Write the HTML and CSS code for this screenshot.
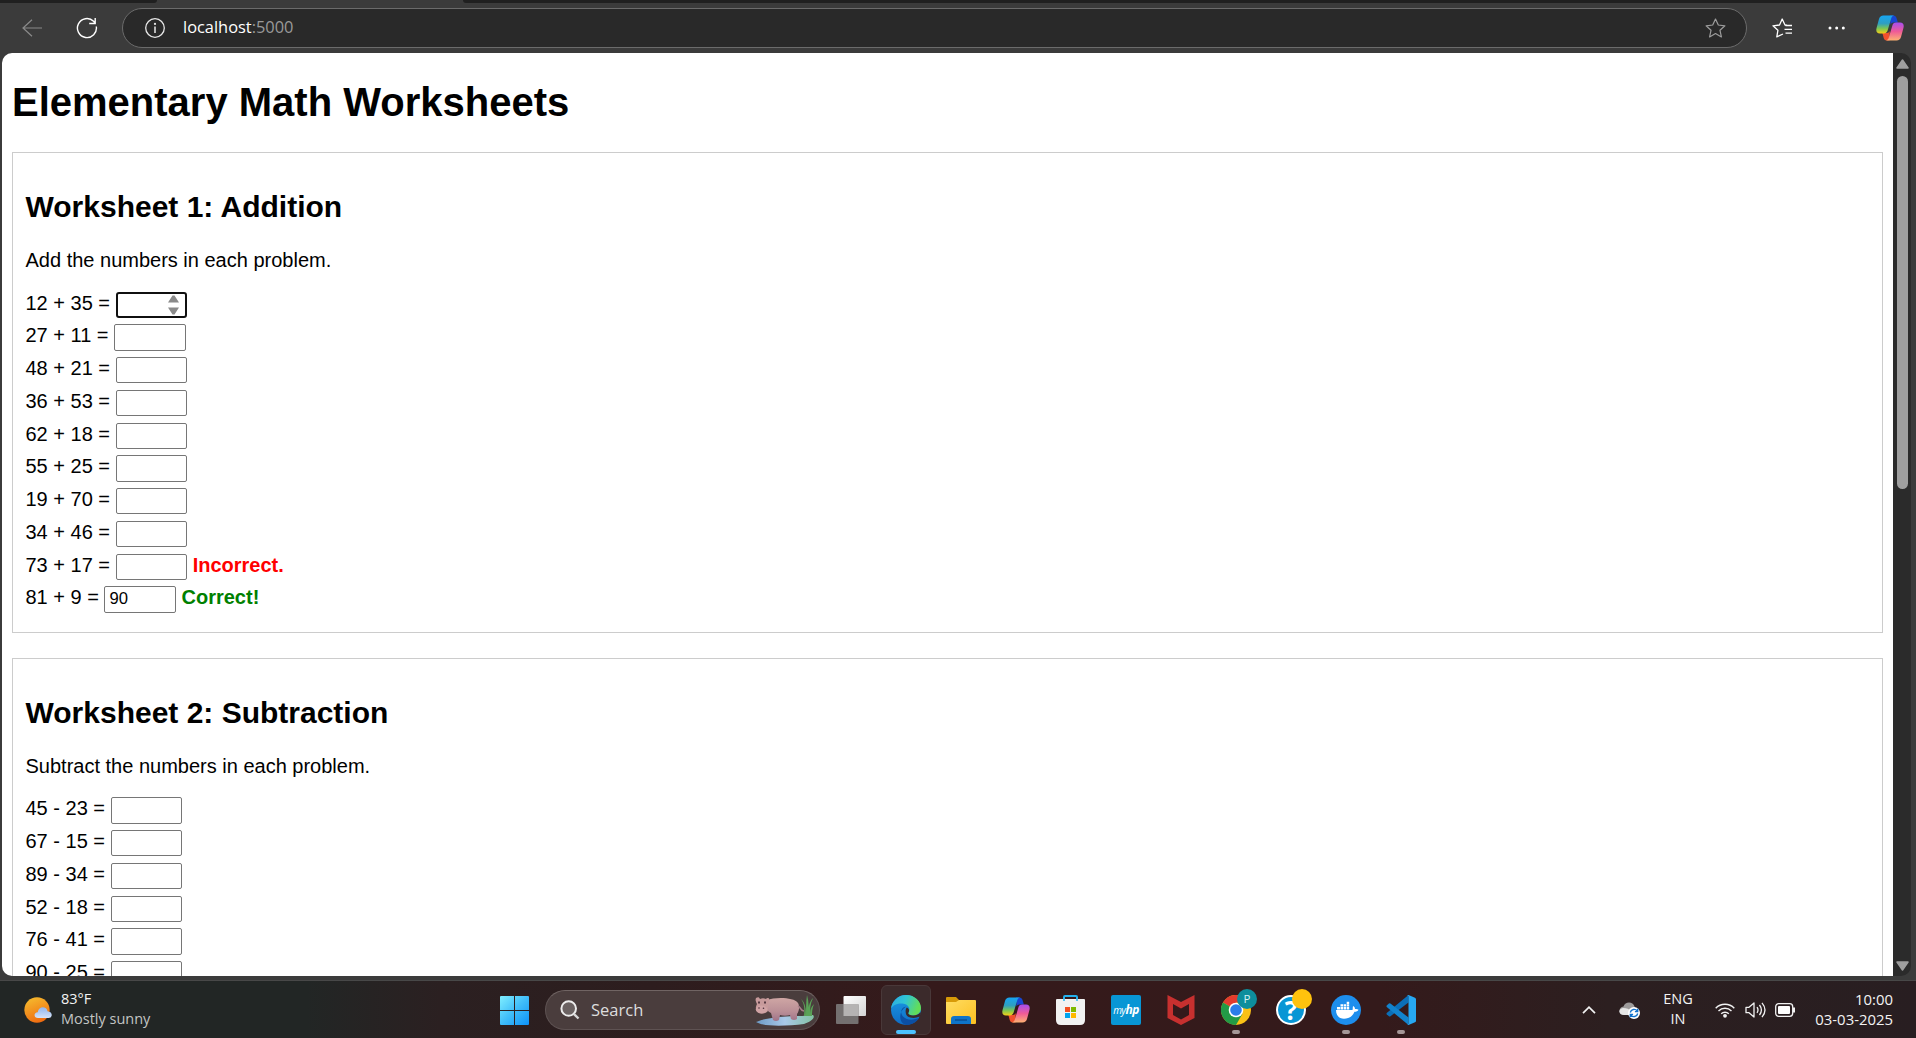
FILE: index.html
```html
<!DOCTYPE html>
<html lang="en">
<head>
<meta charset="utf-8">
<title>Elementary Math Worksheets</title>
<link rel="stylesheet" href="styles.css">
</head>
<body>
<svg width="0" height="0" class="defs" aria-hidden="true">
  <defs>
    <linearGradient id="cpA" x1="0" y1="0" x2="0" y2="1"><stop offset="0" stop-color="#16a5f3"/><stop offset=".45" stop-color="#2f9fc0"/><stop offset=".72" stop-color="#7cc653"/><stop offset="1" stop-color="#f5cf17"/></linearGradient>
    <linearGradient id="cpB" x1="0" y1="0" x2="0" y2="1"><stop offset="0" stop-color="#a64df0"/><stop offset=".5" stop-color="#ef5b97"/><stop offset="1" stop-color="#fdb172"/></linearGradient>
    <symbol id="copilot" viewBox="0 0 28 26">
      <path d="M14 .5h3.500c1.500 0 2.500 1 3 2.500l1.400 4.500h-4.400c-1.500 0-2.500.8-3 2z" fill="#1746d2"/>
      <path d="M13.500 25.500h-3c-1.500 0-2.300-1-2.800-2.500L6.400 18h4.400c1.500 0 2.400-.8 2.900-2z" fill="#f0502d"/>
      <path d="M7.500.5H18c-1.600.4-2.400 1.500-2.900 3.200l-3.400 11.600c-.6 2-1.700 3.200-3.900 3.200H4C.8 18.500-.2 16.500.5 13.200L3 4C3.700 1.700 5 .5 7.500.5z" fill="url(#cpA)"/>
      <path d="M20.500 25.500H10c1.600-.4 2.400-1.500 2.900-3.200l3.400-11.600c.6-2 1.700-3.200 3.900-3.200H24c3.200 0 4.200 2 3.500 5.300L25 22c-.7 2.300-2 3.500-4.500 3.500z" fill="url(#cpB)"/>
    </symbol>
  </defs>
</svg>

<div class="desktop">
  <header class="browser">
    <div class="tabs"><span class="tab-left"></span><span class="tab-right"></span></div>
    <div class="toolbar">
      <svg class="back" width="20" height="18" viewBox="0 0 20 18"><path d="M10 .7 1 9l9 8.300M1 9h19" fill="none" stroke="#8a8a8a" stroke-width="1.200"/></svg>
      <svg class="reload" width="22" height="22" viewBox="0 0 22 22"><path d="M20.300 9.500A9.500 9.500 0 1 1 17.600 4.300L19 6M19.200 1v5.500h-6" fill="none" stroke="#fff" stroke-width="1.400"/></svg>
      <div class="address">
        <svg width="20" height="20" viewBox="0 0 20 20"><circle cx="10" cy="10" r="9.300" fill="none" stroke="#e8e8e8" stroke-width="1.300"/><path d="M10 8.500v6.500" stroke="#e8e8e8" stroke-width="1.500"/><circle cx="10" cy="5.900" r="1.100" fill="#e8e8e8"/></svg>
        <span class="url">localhost<span class="port">:5000</span></span>
        <svg class="star" width="21" height="20" viewBox="0 0 21 20"><path d="m10.500 1 2.800 6 6.600.8-4.900 4.500 1.400 6.600-5.900-3.300-5.900 3.300L6 12.300 1.100 7.800 7.700 7z" fill="none" stroke="#9c9c9c" stroke-width="1.200" stroke-linejoin="round"/></svg>
      </div>
      <svg class="favs" width="21" height="20" viewBox="0 0 21 20"><path d="M11 16 4.800 18.900 5.900 12.300 1 7.800 7.500 7l2.700-6L13 7l2 .4" fill="none" stroke="#fff" stroke-width="1.300" stroke-linejoin="round"/><path d="M13.500 7.500H20M12.500 11.300H20M13.500 15.200H20" fill="none" stroke="#fff" stroke-width="1.300"/></svg>
      <svg class="more" width="18" height="4" viewBox="0 0 18 4"><g fill="#fff"><circle cx="2" cy="2" r="1.500"/><circle cx="8.700" cy="2" r="1.500"/><circle cx="15.300" cy="2" r="1.500"/></g></svg>
      <svg class="cp" width="28" height="26"><use href="#copilot"/></svg>
    </div>
  </header>

  <div class="viewport">
    <main class="page">
      <h1>Elementary Math Worksheets</h1>
      <section class="worksheet">
        <h2>Worksheet 1: Addition</h2>
        <p>Add the numbers in each problem.</p>
        <div class="problem"><span>12 + 35 =</span><div class="answer focused"><svg width="11" height="20" viewBox="0 0 11 20"><path d="M4.500.5h2L11 7.500H0zM4.500 19.500h2L11 12.500H0z" fill="#8a8a8a"/></svg></div></div>
        <div class="problem"><span>27 + 11 =</span><div class="answer"></div></div>
        <div class="problem"><span>48 + 21 =</span><div class="answer"></div></div>
        <div class="problem"><span>36 + 53 =</span><div class="answer"></div></div>
        <div class="problem"><span>62 + 18 =</span><div class="answer"></div></div>
        <div class="problem"><span>55 + 25 =</span><div class="answer"></div></div>
        <div class="problem"><span>19 + 70 =</span><div class="answer"></div></div>
        <div class="problem"><span>34 + 46 =</span><div class="answer"></div></div>
        <div class="problem"><span>73 + 17 =</span><div class="answer"></div><b class="incorrect">Incorrect.</b></div>
        <div class="problem"><span>81 + 9 =</span><div class="answer">90</div><b class="correct">Correct!</b></div>
      </section>
      <section class="worksheet">
        <h2>Worksheet 2: Subtraction</h2>
        <p>Subtract the numbers in each problem.</p>
        <div class="problem"><span>45 - 23 =</span><div class="answer"></div></div>
        <div class="problem"><span>67 - 15 =</span><div class="answer"></div></div>
        <div class="problem"><span>89 - 34 =</span><div class="answer"></div></div>
        <div class="problem"><span>52 - 18 =</span><div class="answer"></div></div>
        <div class="problem"><span>76 - 41 =</span><div class="answer"></div></div>
        <div class="problem"><span>90 - 25 =</span><div class="answer"></div></div>
      </section>
    </main>
    <div class="scrollbar">
      <svg width="13" height="10" viewBox="0 0 13 10"><path d="M6.500 1 12 9H1z" fill="#9f9f9f" stroke="#9f9f9f" stroke-width="1.500" stroke-linejoin="round"/></svg>
      <div class="thumb"></div>
      <svg width="13" height="10" viewBox="0 0 13 10"><path d="M6.500 9 12 1H1z" fill="#9f9f9f" stroke="#9f9f9f" stroke-width="1.500" stroke-linejoin="round"/></svg>
    </div>
  </div>

  <footer class="taskbar">
    <div class="weather">
      <svg width="28" height="27" viewBox="0 0 28 27"><defs><linearGradient id="sun" x1=".2" y1="0" x2=".6" y2="1"><stop offset="0" stop-color="#f5bb2e"/><stop offset="1" stop-color="#ef6a10"/></linearGradient><linearGradient id="cl" x1="0" y1="0" x2="0" y2="1"><stop offset="0" stop-color="#8fb5ee"/><stop offset="1" stop-color="#d5e2f8"/></linearGradient></defs><circle cx="13" cy="13" r="12.700" fill="url(#sun)"/><path d="M14 21c-4.500 0-4.500-5.500-.3-5.700 1-7 9.300-6.300 9.800-1 5.500.3 5.500 6.700 1 6.700z" fill="url(#cl)"/></svg>
      <div class="weather-text"><span>83°F</span><span class="dim">Mostly sunny</span></div>
    </div>
    <svg class="start" width="29" height="29" viewBox="0 0 29 29"><defs><linearGradient id="win" gradientUnits="userSpaceOnUse" x1="0" y1="0" x2="29" y2="29"><stop offset="0" stop-color="#80efff"/><stop offset=".5" stop-color="#40bdf9"/><stop offset="1" stop-color="#0d92f8"/></linearGradient></defs><path d="M1 0h13v14H0V1q0-1 1-1zM15 0h13q1 0 1 1v13H15zM0 15h14v14H1q-1 0-1-1zM15 15h14v13q0 1-1 1H15z" fill="url(#win)"/></svg>
    <div class="search">
      <svg width="20" height="20" viewBox="0 0 20 20"><circle cx="8.700" cy="8.500" r="7.300" fill="#6b6262" stroke="#ededed" stroke-width="2"/><path d="m13.800 13.800 4.700 4.700" stroke="#d8d8d8" stroke-width="2.400"/></svg>
      <span>Search</span>
      <svg class="hippo" width="60" height="32" viewBox="0 0 60 32">
        <defs><linearGradient id="hp" x1="0" y1="0" x2="0" y2="1"><stop offset="0" stop-color="#cfa6a4"/><stop offset=".6" stop-color="#b98e96"/><stop offset="1" stop-color="#9f7389"/></linearGradient><linearGradient id="water" x1="0" y1="0" x2="1" y2="0"><stop offset="0" stop-color="#6d9ac5"/><stop offset=".5" stop-color="#a9c9e8"/><stop offset="1" stop-color="#83c2a4"/></linearGradient></defs>
        <path d="M1 28c8-4 28-6 46-6l11-1c3 3-3 7-9 9-17 2-40 3-48-2z" fill="url(#water)"/>
        <g fill="#5aa257"><path d="M49 22C50 14 49 8 45 4c6 5 6 12 6 18zM51 22c0-8 0-14 1-21 2 7 2 14 1 21zM53 22c0-8 1-14 5-18-3 6-3 12-3 18zM55 22c0-6 1-9 4-12-2 5-2 8-2 12z"/></g>
        <path d="M12 6c8-3 27-3 31 3 2 3 1 9-1 11l0 5q-3 2-6 0l-1-4c-3 1-7 1-10 0l-1 5q-3 2-6 0l-2-7c-5-2-6-8-4-13z" fill="url(#hp)"/>
        <path d="M43 12c3 1 2 5 6 5" fill="none" stroke="#a67d88" stroke-width="1.700"/>
        <path d="M1 4c2-1 3-1 4 1 2-1 4-1 6 0 1-2 4-1 3 1l-1 9c1 5-10 6-11 2-2-2-1-5 0-7C1 8 0 6 1 4z" fill="#c79a9b"/>
        <ellipse cx="6.500" cy="15.500" rx="5.700" ry="4" fill="#d0a3a5"/>
        <g fill="#4b303b"><ellipse cx="4" cy="8.500" rx=".9" ry="1.200"/><ellipse cx="10" cy="8.500" rx=".9" ry="1.200"/><circle cx="4" cy="14" r=".8"/><circle cx="8.500" cy="14.200" r=".8"/></g>
      </svg>
    </div>
    <nav class="apps">
      <div class="app"><svg width="30" height="28" viewBox="0 0 30 28"><defs><linearGradient id="tv" x1="0" y1="0" x2="1" y2="1"><stop offset="0" stop-color="#fff"/><stop offset="1" stop-color="#d4d4d4"/></linearGradient></defs><rect x="7.500" width="22.500" height="20" rx="1" fill="url(#tv)"/><rect y="8" width="22.500" height="20" rx="1" fill="#747070"/><path d="M7.500 8h15v12h-15z" fill="#b5b3b3"/></svg></div>
      <div class="app active"><svg width="30" height="30" viewBox="0 0 30 30"><defs><linearGradient id="eg" x1="0" y1="0" x2="1" y2=".3"><stop offset="0" stop-color="#2ba9e6"/><stop offset=".5" stop-color="#30c5d5"/><stop offset="1" stop-color="#62dd59"/></linearGradient><linearGradient id="eb" x1="0" y1="0" x2="0" y2="1"><stop offset="0" stop-color="#1a9be5"/><stop offset="1" stop-color="#0f6cc5"/></linearGradient></defs>
        <circle cx="15" cy="15" r="15" fill="url(#eb)"/>
        <path d="M15 11.500c-5 1-6 6-3.500 9.500 3.500 4 10 5 17 1.500C25 28 20 30 15.500 30 8 29 6.500 17 15 11.500z" fill="#0c4fa3"/>
        <path d="M0 13.500C1 6 7.500 0 15 0c9 0 15 6.500 15 13 0 5-4 7.500-8 7.500-3.500 0-5.500-1.500-4.500-3 2-2.500 1-8.500-6-9C7 8 2 10 0 13.500z" fill="url(#eg)"/>
        <path d="M17.500 17.500c-1 1.500 1 3 4.500 3 3 0 5.500-1.200 7.500-3.300q1 1.500-.7 4.300c-5 2.500-12.500 1.700-13.800-2.500-.7-2.500-.5-5 .8-6.500 2 .5 3 3 1.700 5z" fill="#3b2a2b"/></svg><i class="bar"></i></div>
      <div class="app"><svg width="30" height="27" viewBox="0 0 30 27"><defs><linearGradient id="fd" x1="0" y1="0" x2="1" y2="1"><stop offset="0" stop-color="#ffdc62"/><stop offset="1" stop-color="#fcc021"/></linearGradient></defs><path d="M1 0h9l3 3v5H0V1q0-1 1-1z" fill="#d89a08"/><path d="M0 5h10l3-2h16q1 0 1 1v22q0 1-1 1H1q-1 0-1-1z" fill="url(#fd)"/><path d="M5 27v-5q0-3 3-3h14q3 0 3 3v5z" fill="#0f74c9"/><path d="M9 23h12" stroke="#0a4f93" stroke-width="1.500"/></svg></div>
      <div class="app"><svg width="28" height="26"><use href="#copilot"/></svg></div>
      <div class="app"><svg class="store" width="29" height="30" viewBox="0 0 29 30"><path d="M8 6V2q0-1 1-1h11q1 0 1 1v4" fill="none" stroke="#25b2ee" stroke-width="2"/><path d="M0 5q0-1 1-1h27q1 0 1 1v20q0 5-5 5H5q-5 0-5-5z" fill="#f2f2f2"/><path d="M8 2v4M21 2v4" stroke="#25b2ee" stroke-width="1.500"/><path d="M9 12h5v5H9z" fill="#f25022"/><path d="M15 12h5v5h-5z" fill="#7fba00"/><path d="M9 18h5v5H9z" fill="#00a4ef"/><path d="M15 18h5v5h-5z" fill="#ffb900"/></svg></div>
      <div class="app"><div class="myhp">my<b>hp</b></div></div>
      <div class="app"><svg width="28" height="30" viewBox="0 0 28 30"><path d="m.5 0 13.500 7L27.500 0v23L14 30 .5 23z" fill="#c7302f"/><path d="m6 9 8 4.500L22 9v11l-8 4.500L6 20z" fill="#35191b"/></svg></div>
      <div class="app"><svg width="30" height="30" viewBox="0 0 30 30"><circle cx="15" cy="15" r="15" fill="#fbc116"/><path d="M15 15 2 7.500A15 15 0 0 1 28 7.500H15z" fill="#e33b2e"/><path d="M2 7.500A15 15 0 0 0 15 30l6.500-11.300L15 15z" fill="#229a46"/><circle cx="15" cy="15" r="7.300" fill="#fff"/><circle cx="15" cy="15" r="5.800" fill="#2b7de9"/></svg><span class="badge profile">P</span><i class="dot"></i></div>
      <div class="app"><div class="help">?</div><span class="badge yellow"></span></div>
      <div class="app"><svg width="30" height="30" viewBox="0 0 30 30"><circle cx="15" cy="15" r="15" fill="#1d8eed"/><path d="M5 15h16.500c.5-1.500 0-3 .7-4 1.300.8 1.800 1.800 1.800 3 1.500-.3 2.700 0 3.500.7-.8 1.500-2 2-4 2-2 5-6 7-10.500 7C8 23.700 5 20.500 5 15z" fill="#fff"/><path d="M6 12h3v2.500H6zM9.500 12h2.500v2.500H9.500zM12.600 12h2.500v2.500h-2.500zM15.700 12h2.500v2.500h-2.500zM9.500 9.200h2.500v2.300H9.500zM12.600 9.200h2.500v2.300h-2.500zM15.700 9.200h2.500v2.300h-2.500zM15.700 6.700h2.500V9h-2.500z" fill="#fff"/></svg><i class="dot"></i></div>
      <div class="app"><svg width="30" height="30" viewBox="0 0 30 30"><path d="m.7 19.200 2.200 2q.8.500 1.500 0L22.500 7.500V0L.7 18q-.5.600 0 1.200z" fill="#0b6fb8"/><path d="m.7 10.500 2.200-2q.8-.5 1.500 0L22.500 22.500V30L.7 12q-.5-.6 0-1.500z" fill="#1283cd"/><path d="M22.500 0 29 2.800q1 .5 1 1.500v21.400q0 1-1 1.500L22.500 30q-1 .2-1.500-.5 1.500.5 1.500-1V1.500q0-1.500-1.500-1 .5-.7 1.500-.5z" fill="#27a8f2"/></svg><i class="dot"></i></div>
    </nav>
    <div class="tray">
      <svg class="chev" width="14" height="8" viewBox="0 0 14 8"><path d="m1 7.200 6-6 6 6" fill="none" stroke="#f2f2f2" stroke-width="1.700"/></svg>
      <svg class="cloud" width="21" height="18" viewBox="0 0 21 18"><path d="M6 14C-1 14-1 6 4.500 5.500 6 0 14 0 15.500 5.500L17 9 9 14z" fill="#9c9a9a"/><path d="M5 14c-6 0-6-6.500-1-7 4 0 6 1 8 3l-2 4z" fill="#e6e6e6"/><circle cx="15" cy="12" r="6" fill="#fff"/><path d="M11.300 11.500a3.900 3.900 0 0 1 7-1.500M18.700 12.500a3.900 3.900 0 0 1-7 1.500M18.700 7.800v2.800h-2.800M11.300 16.200v-2.800h2.800" fill="none" stroke="#1272cc" stroke-width="1.400"/></svg>
      <div class="lang"><span>ENG</span><span>IN</span></div>
      <svg class="wifi" width="20" height="16" viewBox="0 0 20 16"><g fill="none" stroke="#f2f2f2" stroke-width="1.400"><path d="M.7 6.200a13 13 0 0 1 18.600 0M3.500 9a9.200 9.200 0 0 1 13 0M6.200 11.800a5.400 5.400 0 0 1 7.600 0"/></g><circle cx="10" cy="13.800" r="1.900" fill="#f2f2f2"/></svg>
      <svg class="vol" width="21" height="18" viewBox="0 0 21 18"><path d="M1 6.300h3L9 2v14l-5-4.300H1zM12 6.200q2 2.800 0 5.600M14.500 4q3.800 5 0 10M17 1.800q6 7.200 0 14.400" fill="none" stroke="#f2f2f2" stroke-width="1.300" stroke-linejoin="round"/></svg>
      <svg class="batt" width="21" height="14" viewBox="0 0 21 14"><rect x=".7" y=".7" width="17" height="12.600" rx="3" fill="none" stroke="#f2f2f2" stroke-width="1.300"/><rect x="3" y="3" width="12" height="8" rx="1" fill="#fff"/><path d="M19 4.500v5" stroke="#f2f2f2" stroke-width="2"/></svg>
      <div class="clock"><span>10:00</span><span>03-03-2025</span></div>
    </div>
  </footer>
</div>
</body>
</html>
```
FILE: styles.css
```css
* { box-sizing: border-box; }
html, body { height: 100%; overflow: hidden; }
body { margin: 0; background: #3b3b3b; }
svg { display: block; flex: none; }
.defs { position: absolute; }
.desktop { width: 1916px; height: 1038px; overflow: hidden; display: flex; flex-direction: column; font-family: "Open Sans", "Noto Sans", sans-serif; }

/* Browser toolbar */
.browser { height: 53px; flex: none; }
.tabs { height: 3px; display: flex; justify-content: space-between; }
.tab-left { width: 157px; background: #202020; border-bottom-right-radius: 3px; }
.tab-right { width: 1453px; background: #202020; border-bottom-left-radius: 3px; }
.toolbar { height: 50px; display: flex; align-items: center; padding: 0 12px 0 22px; }
.toolbar > svg { margin-top: -1px; }
.reload { margin-left: 34px; }
.address { margin-left: 24px; width: 1625px; height: 40px; border: 1px solid #6b6b6b; border-radius: 20px; background: #292929; display: flex; align-items: center; padding: 0 20px 0 22px; }
.url { margin-left: 18px; font-size: 16.400px; letter-spacing: 0; color: #fff; line-height: 22px; margin-top: -2px; }
.port { color: #999; }
.star { margin-left: auto; }
.favs { margin-left: 25px; }
.more { margin-left: 35px; }
.cp { margin-left: auto; }

/* Document area */
.viewport { height: 923px; flex: none; margin: 0 5px 0 2px; display: flex; border-radius: 10px; overflow: hidden; background: #2b2b2b; }
.page { width: 1891px; height: 923px; overflow: hidden; background: #fff; color: #000; padding: 26px 10px 0; font-family: Arial, "Liberation Sans", sans-serif; font-size: 20px; line-height: 23px; }
h1 { margin: 0 0 27px; font-size: 40px; line-height: 46px; }
h2 { margin: 0 0 25px; font-size: 30px; line-height: 34px; }
p { margin: 0 0 19.500px; }
.worksheet { border: 1px solid #ccc; padding: 37px 12.500px 12.900px; margin-bottom: 25px; }
.problem { height: 26.500px; margin-bottom: 6.250px; display: flex; align-items: flex-start; gap: 5.560px; }
.problem > span { white-space: nowrap; }
.answer { width: 71.500px; height: 26.300px; border: 1px solid #767676; border-radius: 2px; padding: 0 4px; font-size: 16.670px; line-height: 24px; display: flex; }
.focused { border: 2px solid #101010; border-radius: 3px; padding-right: 6px; justify-content: flex-end; align-items: center; }
.incorrect { color: red; }
.correct { color: green; }
.scrollbar { width: 18px; display: flex; flex-direction: column; align-items: center; padding: 6px 0 5px; }
.thumb { width: 11px; height: 413px; margin: 7px 0 auto; border-radius: 6px; background: #9f9f9f; }

/* Taskbar */
.taskbar { height: 58px; margin-top: 4px; border-top: 1px solid #484848; display: flex; align-items: center; padding: 1px 23px 0 24px; color: #f3f3f3; font-size: 14.500px; line-height: 20px; background: linear-gradient(90deg, #222625 0, #222625 16%, #2b2021 23%, #2d1d1e 34%, #351a1b 48%, #341a1b 72%, #2c1f20 84%, #281e21 100%); }
.weather { width: 476px; display: flex; align-items: center; gap: 9px; }
.weather-text, .lang, .clock { display: flex; flex-direction: column; padding-bottom: 2px; }
.dim { color: #c3c5c4; }
.search { width: 275px; height: 40px; margin-left: 16px; border: 1px solid #5e5252; border-top-color: #706463; border-radius: 20px; background: #4a3d3d; display: flex; align-items: center; padding: 0 4px 0 14px; font-size: 16.500px; color: #ddd; }
.search span { margin-left: 11px; }
.hippo { margin-left: auto; }
.apps { display: flex; margin-left: 3.500px; }
.app { width: 55px; height: 50px; display: flex; align-items: center; justify-content: center; position: relative; }
.active { width: 50px; margin: 0 2.500px; border: 1px solid #493839; border-radius: 6px; background: #3b2a2b; }
.bar, .dot { position: absolute; bottom: 1px; left: 50%; transform: translateX(-50%); width: 8px; height: 4px; border-radius: 2px; background: #a59696; }
.bar { width: 20px; bottom: 0; background: #4cc2ff; }
.store { margin-right: 1px; }
.myhp { width: 30px; height: 30px; border-radius: 2px; background: #0896d5; color: #fff; font: italic 10px/29px "Open Sans", sans-serif; letter-spacing: -.5px; text-align: center; }
.myhp b { font-size: 12px; }
.badge { position: absolute; width: 20px; height: 20px; border-radius: 50%; left: 28.500px; top: 4px; }
.profile { background: #0e8e9c; color: #d6f0f2; font-size: 11.500px; text-align: center; }
.yellow { background: #ffc20d; }
.help { width: 30px; height: 30px; border-radius: 50%; border: 2px solid #fff; background: #0896d5; color: #fff; font: bold 26px/26px "Open Sans", sans-serif; text-align: center; }
.tray { margin-left: auto; display: flex; align-items: center; }
.cloud { margin-left: 23px; }
.lang { width: 34px; margin-left: 21px; align-items: center; }
.wifi { margin-left: 20px; }
.vol { margin-left: 10px; }
.batt { margin-left: 9px; }
.clock { width: 97px; align-items: flex-end; white-space: nowrap; font-size: 14.900px; }
```
